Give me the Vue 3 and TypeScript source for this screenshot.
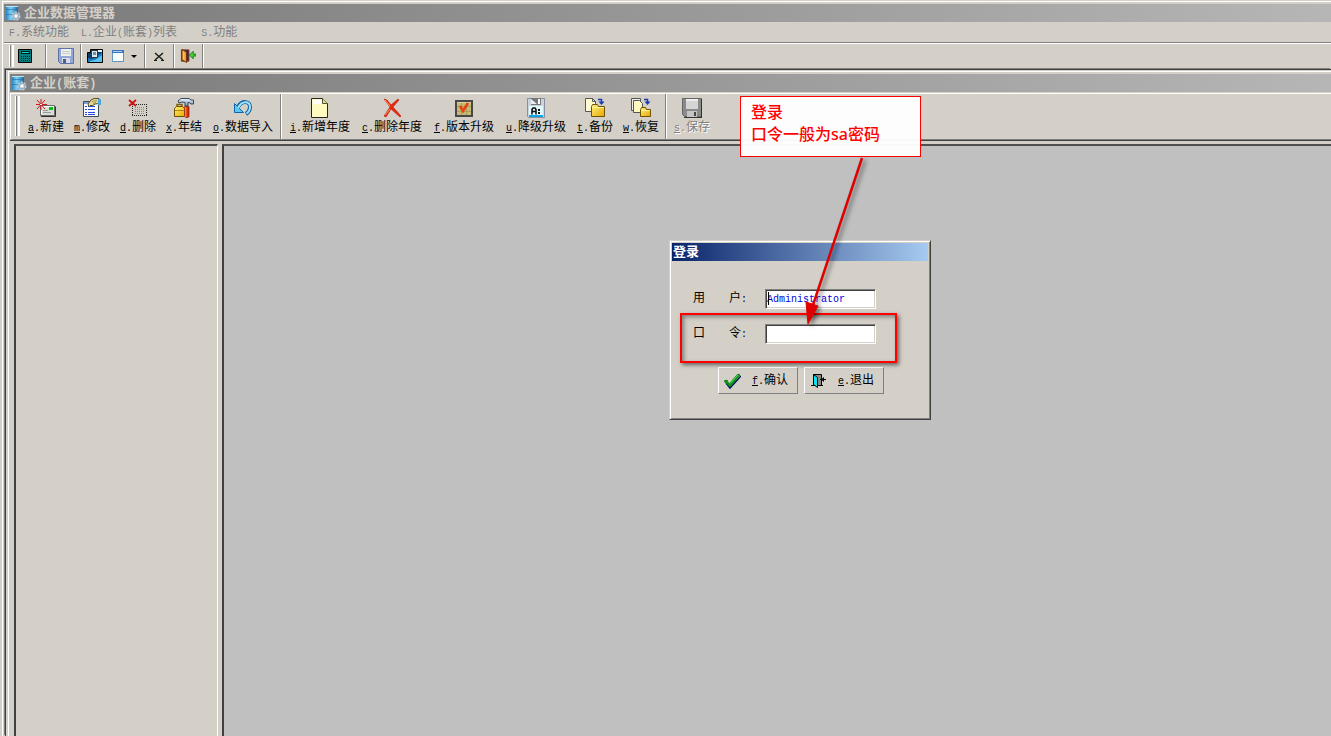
<script setup lang="ts">
import { defineComponent, h, ref } from 'vue'

interface Action {
  icon: string
  key: string
  label: string
  wide?: boolean
  disabled?: boolean
}

/* Splits a caption into half-width and full-width runs so each gets its own face. */
const Caption = defineComponent({
  props: { text: { type: String, required: true } },
  setup(props) {
    return () =>
      (props.text.match(/[\x00-\x7f]+|[^\x00-\x7f]+/g) ?? []).map((run) =>
        h('span', { class: run.charCodeAt(0) < 128 ? 'half' : 'full' }, run),
      )
  },
})

const menus = ['F.系统功能', 'L.企业(账套)列表', 'S.功能']

const groups: Action[][] = [
  [
    { icon: 'new', key: 'a', label: '新建' },
    { icon: 'edit', key: 'm', label: '修改' },
    { icon: 'remove', key: 'd', label: '删除' },
    { icon: 'tools', key: 'x', label: '年结' },
    { icon: 'import', key: 'o', label: '数据导入', wide: true },
  ],
  [
    { icon: 'page', key: 'i', label: '新增年度', wide: true },
    { icon: 'cross', key: 'c', label: '删除年度', wide: true },
    { icon: 'upgrade', key: 'f', label: '版本升级', wide: true },
    { icon: 'disk-a', key: 'u', label: '降级升级', wide: true },
    { icon: 'backup', key: 't', label: '备份' },
    { icon: 'restore', key: 'w', label: '恢复' },
  ],
  [{ icon: 'save', key: 's', label: '保存', disabled: true }],
]

const user = ref('Administrator')
const password = ref('')
</script>

<template>
  <svg class="sprite" aria-hidden="true">
    <defs>
      <linearGradient id="g-blue" x1="0" y1="0" x2="1" y2="0">
        <stop offset="0" stop-color="#2f86c0" />
        <stop offset="0.4" stop-color="#7fd0f2" />
        <stop offset="1" stop-color="#1468a8" />
      </linearGradient>
      <linearGradient id="g-metal" x1="0" y1="0" x2="0" y2="1">
        <stop offset="0" stop-color="#f4f8ff" />
        <stop offset="1" stop-color="#6d88a6" />
      </linearGradient>
      <linearGradient id="g-orange" x1="0" y1="0" x2="1" y2="0">
        <stop offset="0" stop-color="#ffb060" />
        <stop offset="0.5" stop-color="#f04010" />
        <stop offset="1" stop-color="#a81c00" />
      </linearGradient>
      <linearGradient id="g-folder" x1="0" y1="0" x2="1" y2="1">
        <stop offset="0" stop-color="#fff27a" />
        <stop offset="1" stop-color="#e8a800" />
      </linearGradient>
    </defs>
    <symbol id="i-app" viewBox="0 0 16 16">
      <path d="M1 1h12v14H1z" fill="url(#g-blue)" />
      <path d="M1 4h12v1H1zM1 9h12v1H1z" fill="#1c6ea8" opacity=".6" />
      <path d="M1 1h12v1H1z" fill="#b8e4f8" />
      <circle cx="11" cy="11" r="3.500" fill="#b9c8d6" stroke="#c9d5e0" stroke-width="2" stroke-dasharray="2 1" />
      <circle cx="11" cy="11" r="3" fill="none" stroke="#7890a8" stroke-width=".6" />
      <circle cx="11" cy="11" r="1.500" fill="#fff" />
    </symbol>
    <symbol id="i-calc" viewBox="0 0 16 16">
      <path d="M1.500 1.500h13v13h-13z" fill="#008080" stroke="#000" />
      <path d="M4 3h9v3H4z" fill="#001818" /><path d="M5 4h7v1H5z" fill="#00e0d0" />
      <path d="M4 8.500h9M4 10.500h9M4 12.500h9" stroke="#001c1c" stroke-dasharray="1 1" />
    </symbol>
    <symbol id="i-floppy" viewBox="0 0 16 16">
      <path d="M.5.5h15v15h-13l-2-2z" fill="#93a7da" stroke="#6070a8" />
      <path d="M3 1h10v7H3z" fill="#eef0ec" /><path d="M4 3.500h8M4 5.500h8" stroke="#c8ccc8" />
      <path d="M4 10h8v5H4z" fill="#d8dce0" /><path d="M5 11h3v4H5z" fill="#4a5e9c" />
    </symbol>
    <symbol id="i-cascade" viewBox="0 0 16 16">
      <path d="M.5 4.500h3v-3h12v13H.5z" fill="#0b3c66" stroke="#000" />
      <path d="M1 10l4 1 5-3 5-4v10H1z" fill="#1878c0" /><path d="M3 13l5-1 7-5v7H3z" fill="#59c4f0" />
      <path d="M4.500 2.500h6v7h-6z" fill="#dfe8ee" stroke="#234" /><path d="M6 4h3v3H6z" fill="#6d91ad" />
      <path d="M11 2h4v2h-4z" fill="#e8f4fa" />
    </symbol>
    <symbol id="i-window" viewBox="0 0 16 16">
      <path d="M1.500 2.500h11v11h-11z" fill="#f6fbff" stroke="#5b95c8" />
      <path d="M1 2h12v3H1z" fill="#3975bd" /><path d="M2 3.500h9" stroke="#a4d0f4" />
    </symbol>
    <symbol id="i-close" viewBox="0 0 16 16">
      <path d="M4 5l8 7M12 5l-8 7" stroke="#182018" stroke-width="1.500" />
      <path d="M3 12.500h3M10 12.500h3" stroke="#182018" />
    </symbol>
    <symbol id="i-door" viewBox="0 0 17 16">
      <path d="M1.500 1.500h8v12h-8z" fill="#25276a" stroke="#8a3c18" />
      <path d="M2 1l5 3v11l-5-3z" fill="#ef9c32" stroke="#70300c" /><path d="M4 3v9" stroke="#ffd67a" />
      <path d="M10 7l4-4v3h3v2h-3v3z" fill="#4fd23c" stroke="#167a18" />
    </symbol>
    <symbol id="i-new" viewBox="0 0 20 20">
      <path d="M4.500 7.500h14v10h-14z" fill="#d9ddd5" stroke="#686868" /><path d="M5 18.500h14.500v-10" fill="none" stroke="#303030" />
      <path d="M5.500 16V8.500H18" fill="none" stroke="#fff" /><path d="M13 9h4v3h-4z" fill="#00c020" />
      <path d="M7 12.500h5M7 14.500h8" stroke="#999" />
      <path d="M5 1v11M0 6.500h11M1 2l8 9M9 2L1 11" stroke="#d4141b" /><path d="M4 6h2v1H4z" fill="#fff" />
    </symbol>
    <symbol id="i-edit" viewBox="0 0 20 20">
      <path d="M1.500 3.500h15v15h-15z" fill="#f8fbff" stroke="#3c4c58" /><path d="M2 5h8" stroke="#7f9fd8" stroke-width="2" />
      <path d="M3 8.500h2M3 11.500h2M3 14.500h2M3 16.500h2M6 8.500h7M6 11.500h7M6 14.500h7M6 16.500h7" stroke="#2846dc" />
      <path d="M6 6l3-4 3-1.500h5v5l-4 .5-3 2-1-1-2 2z" fill="#e6d78c" stroke="#55502c" /><path d="M16 1h3v6h-3z" fill="#4ba7df" />
      <path d="M10 3.500l5-1M11 5.500l3-1" stroke="#a0904c" />
    </symbol>
    <symbol id="i-remove" viewBox="0 0 20 20">
      <path d="M4 6.500h15M4 17.500h15" stroke="#222" stroke-dasharray="1 1" /><path d="M4.500 6v12M18.500 6v12" stroke="#222" stroke-dasharray="1 1" />
      <path d="M7 9.500h10M7 11.500h10M7 13.500h10M7 15.500h10" stroke="#888" stroke-dasharray="1 1" />
      <path d="M1 2l7 6M8 2L1 8" stroke="#d01010" stroke-width="1.800" />
    </symbol>
    <symbol id="i-tools" viewBox="0 0 20 20">
      <path d="M3 9V6.500h5V9" fill="none" stroke="#806010" stroke-width="1.500" />
      <path d="M.5 10.500l2-2h6l2 2v8H.5z" fill="url(#g-folder)" stroke="#6d5100" /><path d="M1 12.500h9" stroke="#b08810" />
      <path d="M4 3l3-2.500h8L17 2h2.500v4H17l-2-1.500h-1V8h-3V4.500L8 4 5 5z" fill="url(#g-metal)" stroke="#34485c" />
      <path d="M10.500 8.500h4.500v10l-1 1h-2.500l-1-1z" fill="url(#g-orange)" stroke="#8b2200" stroke-width=".7" />
    </symbol>
    <symbol id="i-import" viewBox="0 0 20 20">
      <path d="M5 9C9 2 17 3 17 9c0 3-1 5-4 7" fill="none" stroke="#1164a8" stroke-width="4" />
      <path d="M1.500 5.500v9h9z" fill="#58c8f4" stroke="#1164a8" stroke-linejoin="round" />
      <path d="M5 10C9 2 17 3 17 9c0 3-1 5-3.500 6.500" fill="none" stroke="#9fe2fb" stroke-width="2" />
    </symbol>
    <symbol id="i-page" viewBox="0 0 20 20">
      <path d="M1.500.5h11l5 5v14h-16z" fill="#fffac0" stroke="#27251f" /><path d="M12.500.5v5h5" fill="#e8de88" stroke="#57502f" />
      <path d="M3 2h8v4H3z" fill="#fff" />
    </symbol>
    <symbol id="i-cross" viewBox="0 0 20 20">
      <path d="M2 1l3 1 4 5 7-6 1 1-6 7 8 9-1 1-9-8-5 8-2-1 6-9z" fill="#e62b0e" stroke="#b81804" stroke-width=".6" /><path d="M3 2l5 6M3 17l5-6" stroke="#ff9870" />
    </symbol>
    <symbol id="i-upgrade" viewBox="0 0 20 20">
      <path d="M2 3h16v15H2z" fill="#c6ba74" stroke="#484846" stroke-width="2" />
      <path d="M7.500 4v13M12.500 4v13M3 8.500h14M3 13.500h14" stroke="#a89e60" /><path d="M3 4.500h14" stroke="#ddd5a0" />
      <path d="M6 8l3 5 5-8" fill="none" stroke="#e84112" stroke-width="2.500" />
    </symbol>
    <symbol id="i-disk-a" viewBox="0 0 20 20">
      <path d="M1.500.5h17v19h-16l-1-1z" fill="#ccd5dd" stroke="#8890a0" /><path d="M5 0h10v7H5z" fill="#777" /><path d="M5 1l6 5H5z" fill="#eee" /><path d="M12 1h2v5h-2z" fill="#fff" />
      <path d="M3 8h14v10H3z" fill="#e1faff" /><path d="M3 18h14" stroke="#0aa5e9" stroke-width="2" />
      <path d="M6 16.500v-5l1-1.500h2l1 1.500v5M6 13.500h4" fill="none" stroke="#111" stroke-width="1.600" /><path d="M12 11h2v2h-2zM12 14h2v2h-2z" fill="#111" />
    </symbol>
    <symbol id="i-backup" viewBox="0 0 20 20">
      <path d="M.5.5h7l3 3v10H.5z" fill="#fffad0" stroke="#555" /><path d="M7.500.5v3h3" fill="none" stroke="#555" />
      <path d="M6.500 8.500l1-2h5l1 2h6v10h-13z" fill="url(#g-folder)" stroke="#6c5204" /><path d="M7 9.500h12" stroke="#fff4a0" />
      <path d="M13 1.500h3.500V4" fill="none" stroke="#153db1" stroke-width="1.500" /><path d="M13.500 3.500h6l-3 3.500z" fill="#153db1" />
    </symbol>
    <symbol id="i-restore" viewBox="0 0 20 20">
      <path d="M.5.5h9v12h-9z" fill="#eee" stroke="#555" /><path d="M2.500 2.500h6l3 3v9h-9z" fill="#fffbc0" stroke="#555" />
      <path d="M9.500 11.500l1-2h4l1 2h4v7h-10z" fill="url(#g-folder)" stroke="#6c5204" /><path d="M10 12.500h9" stroke="#fff4a0" />
      <path d="M13 1.500h3.500V4" fill="none" stroke="#153db1" stroke-width="1.500" /><path d="M13.500 3.500h6l-3 3.500z" fill="#153db1" />
    </symbol>
    <symbol id="i-save" viewBox="0 0 20 20">
      <path d="M.5.5h19v18H2.500l-2-2z" fill="#8a8a8a" stroke="#666" /><path d="M4 1h12v10H4z" fill="#d4d4d4" /><path d="M4 1h12v2H4z" fill="#eee" />
      <path d="M5 13h10v6H5z" fill="#c4c4c4" /><path d="M12 14h2v4h-2z" fill="#444" /><path d="M19.500 1v18M2 19.500h18" stroke="#333" />
    </symbol>
    <symbol id="i-check" viewBox="0 0 18 18">
      <path d="M3 11l4 5L18 4" fill="none" stroke="#00145c" stroke-width="1.500" />
      <path d="M1 9l3-1 2 4L15 2l2 1L7 15z" fill="#0c9c18" stroke="#087010" stroke-width=".8" /><path d="M7 11.500L15 3" stroke="#4fe050" />
    </symbol>
    <symbol id="i-exit" viewBox="0 0 18 18">
      <path d="M4.500 2.500h8v11h-8z" fill="#888" stroke="#000" /><path d="M4.500 2.500l4 3v10l-4-3z" fill="#10e4ef" stroke="#000" />
      <path d="M2 13.500h3M9 13.500h5M11 7.500h6" stroke="#000" /><path d="M15 5v5l-3-2.500z" />
    </symbol>
  </svg>

  <main class="desktop">
    <header class="titlebar">
      <svg class="icon16"><use href="#i-app" /></svg>
      <h1>企业数据管理器</h1>
    </header>
    <nav class="menubar">
      <button v-for="m in menus" :key="m" type="button" disabled><Caption :text="m" /></button>
    </nav>
    <div class="quickbar">
      <i class="grip"></i>
      <div class="cell calc"><button type="button" aria-label="计算器"><svg class="icon16"><use href="#i-calc" /></svg></button></div>
      <div class="cell disk"><button type="button" aria-label="保存"><svg class="icon16"><use href="#i-floppy" /></svg></button></div>
      <div class="cell windows">
        <button type="button" aria-label="层叠"><svg class="icon16"><use href="#i-cascade" /></svg></button>
        <button type="button" class="split" aria-label="窗口"><svg class="icon16"><use href="#i-window" /></svg><i class="caret"></i></button>
      </div>
      <div class="cell"><button type="button" aria-label="关闭"><svg class="icon16"><use href="#i-close" /></svg></button></div>
      <div class="cell"><button type="button" aria-label="退出系统"><svg class="icon16"><use href="#i-door" /></svg></button></div>
    </div>

    <section class="mdi">
      <div class="child">
        <header class="titlebar">
          <svg class="icon16"><use href="#i-app" /></svg>
          <h2><Caption text="企业(账套)" /></h2>
        </header>
        <div class="toolbar">
          <i class="grip"></i>
          <div v-for="(group, n) in groups" :key="n" class="group">
            <button v-for="a in group" :key="a.key" type="button" :class="{ wide: a.wide }" :disabled="a.disabled">
              <svg class="icon20"><use :href="'#i-' + a.icon" /></svg>
              <span class="text"><u class="half">{{ a.key }}</u><span class="half">.</span><span class="full">{{ a.label }}</span></span>
            </button>
          </div>
        </div>
        <div class="panes">
          <aside class="tree"></aside>
          <div class="canvas"></div>
        </div>
      </div>
    </section>

    <form class="dialog" role="dialog" aria-label="登录" @submit.prevent>
      <h2>登录</h2>
      <div class="fields">
        <label for="user"><span>用</span><span>户<span class="half">:</span></span></label>
        <div class="field"><input id="user" v-model="user" type="text" /><i class="cursor"></i></div>
        <label for="password"><span>口</span><span>令<span class="half">:</span></span></label>
        <div class="field"><input id="password" v-model="password" type="password" /></div>
      </div>
      <div class="actions">
        <button type="submit"><svg class="icon18"><use href="#i-check" /></svg><span class="text"><u class="half">f</u><span class="half">.</span>确认</span></button>
        <button type="button"><svg class="icon18"><use href="#i-exit" /></svg><span class="text"><u class="half">e</u><span class="half">.</span>退出</span></button>
      </div>
    </form>

    <div class="highlight"></div>
    <p class="callout">登录<br />口令一般为sa密码</p>
    <svg class="pointer" viewBox="0 0 80 180" aria-hidden="true">
      <path d="M72 8L22 158" stroke="#e00000" stroke-width="2.500" />
      <path d="M18 174L16 152l6 2 6 2z" fill="#e00000" stroke="#e00000" />
    </svg>
  </main>
</template>

<style>
body {
  margin: 0;
  background: #d4d0c8;
}
</style>

<style scoped>
.sprite {
  position: absolute;
  width: 0;
  height: 0;
}
.desktop {
  position: relative;
  box-sizing: border-box;
  display: flex;
  flex-direction: column;
  height: 100vh;
  padding: 1px 0 0 2px;
  overflow: hidden;
  background: #d4d0c8;
  color: #000;
  font: 12px/16px "Liberation Sans", "Noto Sans CJK SC", sans-serif;
}
.desktop::before {
  content: "";
  position: absolute;
  inset: 1px 0 0 2px;
  border: solid #fff;
  border-width: 1px 0 0 1px;
  pointer-events: none;
}
button {
  padding: 0;
  border: 0;
  background: none;
  color: inherit;
  font: inherit;
  white-space: nowrap;
}
:deep(.half),
.half {
  font-family: "Liberation Mono", monospace;
  font-size: 10px;
  font-weight: 400;
}
.icon16 { flex: none; width: 16px; height: 16px; }
.icon18 { flex: none; width: 18px; height: 18px; }
.icon20 { flex: none; width: 20px; height: 20px; }
.titlebar {
  flex: none;
  display: flex;
  align-items: center;
  gap: 3px;
  height: 18px;
  background: linear-gradient(90deg, #808080, #808080 10%, #b6b6b6);
  color: #d4d0c8;
}
.desktop > .titlebar { margin: 3px 0 0 2px; padding-left: 1px; }
.titlebar h1,
.titlebar h2 {
  margin: 0;
  font-size: 13px;
  line-height: 18px;
}
.titlebar h2 :deep(.half) {
  font-size: 12px;
  font-weight: 700;
}
.menubar {
  flex: none;
  display: flex;
  gap: 12px;
  box-sizing: border-box;
  height: 20px;
  padding: 2px 0 0 7px;
  color: #808080;
}
.menubar button:last-child { margin-left: 12px; }
.quickbar {
  flex: none;
  display: flex;
  height: 25px;
  margin-left: 2px;
  padding-left: 5px;
  border-top: 1px solid #808080;
  box-shadow: inset 0 1px #fff;
}
.grip {
  box-sizing: border-box;
  flex: none;
  width: 5px;
  margin: 2px 0 1px;
  border: solid #fff;
  border-width: 0 1px;
  background: linear-gradient(90deg, #808080 1px, #d4d0c8 1px, #d4d0c8 2px, #fff 2px);
}
.cell {
  display: flex;
  align-items: center;
  gap: 8px;
  margin-top: 1px;
  padding: 0 6px;
  border-right: 1px solid #808080;
  box-shadow: 1px 0 #fff;
}
.cell button { display: flex; align-items: center; }
.cell.calc { padding: 0 12px 0 3px; }
.cell.disk { padding-left: 12px; }
.cell.windows { padding-right: 7px; }
.caret {
  margin-left: 4px;
  border: solid transparent;
  border-width: 3px 3px 0;
  border-top-color: #000;
}
.mdi {
  flex: 1;
  min-height: 0;
  display: flex;
  margin: 1px 0 0 3px;
  border: solid #404040;
  border-width: 1px 0 0 1px;
  box-shadow: -1px -1px #808080;
}
.child {
  flex: 1;
  min-width: 0;
  display: flex;
  flex-direction: column;
  margin: 1px 0 0 2px;
  border: solid #fff;
  border-width: 1px 0 0 1px;
}
.child > .titlebar { margin: 2px 0 0 1px; padding-left: 1px; }
.toolbar {
  flex: none;
  display: flex;
  height: 45px;
  margin: 1px 0 0 1px;
  padding-left: 4px;
  border-top: 1px solid #fff;
  border-left: 1px solid #fff;
  border-bottom: 1px solid #808080;
  box-shadow: 0 1px #404040;
}
.toolbar .grip { height: 40px; }
.group {
  display: flex;
  padding-left: 3px;
}
.group + .group {
  margin-left: 1px;
  padding-left: 3px;
  border-left: 1px solid #808080;
  box-shadow: inset 1px 0 #fff;
}
.group button {
  display: flex;
  flex-direction: column;
  align-items: center;
  width: 46px;
  padding-top: 4px;
}
.group button.wide { width: 72px; }
.group .text { line-height: 18px; }
.group button:disabled {
  color: #808080;
  text-shadow: 1px 1px #fff;
}
.panes {
  flex: 1;
  display: flex;
  gap: 4px;
  margin: 4px 0 0 5px;
}
.tree,
.canvas {
  border: solid #404040;
  border-width: 2px 0 0 2px;
  border-top-color: #505050;
}
.tree {
  flex: none;
  width: 201px;
  border-right: 1px solid #fff;
}
.canvas {
  flex: 1;
  background: #c0c0c0;
}
.dialog {
  position: absolute;
  left: 669px;
  top: 240px;
  box-sizing: border-box;
  width: 262px;
  padding: 2px 1px 25px 2px;
  border: solid #d4d0c8;
  border-width: 1px;
  border-right-color: #404040;
  border-bottom-color: #404040;
  background: #d4d0c8;
  box-shadow: inset 1px 1px #fff, inset -1px -1px #808080;
}
.dialog h2 {
  margin: 0 1px 28px 0;
  padding-left: 1px;
  background: linear-gradient(90deg, #0a246a, #a6caf0);
  color: #fff;
  font-size: 13px;
  line-height: 18px;
}
.fields {
  display: grid;
  grid-template-columns: 72px 111px;
  row-gap: 15px;
  align-items: center;
  padding-left: 21px;
}
.fields label {
  display: flex;
  gap: 24px;
  line-height: 16px;
}
.field { position: relative; display: flex; }
.field input {
  box-sizing: border-box;
  width: 100%;
  height: 20px;
  padding: 0 1px;
  border: 1px solid;
  border-color: #808080 #fff #fff #808080;
  outline: 0;
  background: #fff;
  box-shadow: inset 1px 1px #404040, inset -1px -1px #d4d0c8;
  color: #0000e0;
  font: 10px/16px "Liberation Mono", monospace;
}
.cursor {
  position: absolute;
  left: 3px;
  top: 3px;
  width: 1px;
  height: 13px;
  background: #000;
}
.actions {
  display: flex;
  gap: 6px;
  margin-top: 23px;
  padding-left: 46px;
}
.actions button {
  box-sizing: border-box;
  display: flex;
  align-items: center;
  justify-content: space-between;
  width: 80px;
  height: 27px;
  padding: 0 9px 0 4px;
  border: 1px solid;
  border-color: #fff #808080 #808080 #fff;
}
.highlight {
  position: absolute;
  left: 680px;
  top: 313px;
  box-sizing: border-box;
  width: 217px;
  height: 50px;
  border: 2px solid #f00;
  box-shadow: 2px 2px 4px #0008, inset 2px 2px 4px #0006;
}
.callout {
  position: absolute;
  left: 740px;
  top: 96px;
  box-sizing: border-box;
  width: 181px;
  margin: 0;
  padding: 4px 10px 11px;
  border: 1px solid #f00;
  background: #fffffff5;
  color: #f00;
  font: 500 16px/22px "Noto Sans", "Noto Sans CJK SC", sans-serif;
}
.pointer {
  position: absolute;
  left: 790px;
  top: 150px;
  width: 80px;
  height: 180px;
  filter: drop-shadow(3px 2px 2px #0007);
  pointer-events: none;
}
</style>
